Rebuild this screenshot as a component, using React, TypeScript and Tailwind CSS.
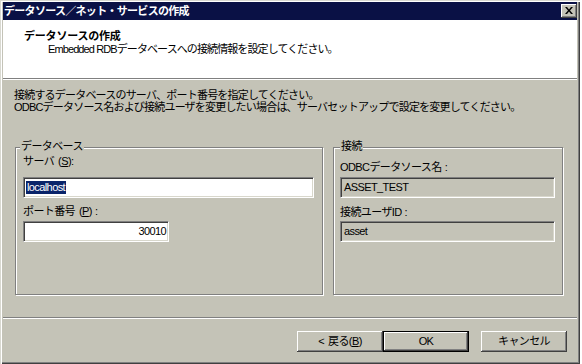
import React from "react";

function CloseButton() {
  return (
    <div className="w-[16px] h-[14px] bg-[#c4c3b7] flex items-center justify-center shadow-[inset_-1px_-1px_0_#404040,inset_1px_1px_0_#ffffff,inset_-2px_-2px_0_#808080]">
      <svg width="8" height="7" viewBox="0 0 8 7" className="mb-[1px]">
        <path d="M0 0h2l2 2.5L6 0h2L5 3.5 8 7H6L4 4.5 2 7H0l3-3.5z" fill="#000" />
      </svg>
    </div>
  );
}

function Group({
  title,
  legendLeft,
  className,
  children,
}: {
  title: string;
  legendLeft: string;
  className: string;
  children: React.ReactNode;
}) {
  return (
    <div
      className={
        "relative flex flex-col border border-[#808080] shadow-[1px_1px_0_#ffffff,inset_1px_1px_0_#ffffff] " +
        className
      }
    >
      <span
        className={
          "absolute top-[-8px] bg-[#c4c3b7] px-[1px] leading-[13px] " +
          legendLeft
        }
      >
        {title}
      </span>
      {children}
    </div>
  );
}

function Field({
  className,
  children,
}: {
  className: string;
  children: React.ReactNode;
}) {
  return (
    <div
      className={
        "h-[21px] flex items-center border-t border-l border-t-[#808080] border-l-[#808080] border-b border-r border-b-white border-r-white shadow-[inset_1px_1px_0_#404040,inset_-1px_-1px_0_#d8d7cc] " +
        className
      }
    >
      {children}
    </div>
  );
}

function Button({
  children,
  isDefault,
}: {
  children: React.ReactNode;
  isDefault?: boolean;
}) {
  if (isDefault) {
    return (
      <div className="w-[86px] h-[21px] border border-black bg-[#c4c3b7] flex items-center justify-center shadow-[inset_-1px_-1px_0_#404040,inset_1px_1px_0_#ffffff,inset_-2px_-2px_0_#808080]">
        {children}
      </div>
    );
  }
  return (
    <div className="w-[86px] h-[21px] bg-[#c4c3b7] flex items-center justify-center shadow-[inset_-1px_-1px_0_#404040,inset_1px_1px_0_#ffffff,inset_-2px_-2px_0_#808080]">
      {children}
    </div>
  );
}

export default function App() {
  return (
    <div className="w-[582px] h-[364px] bg-white overflow-hidden font-['Liberation_Sans','Noto_Sans_CJK_JP',sans-serif] text-[11px] text-black tracking-[-0.6px]">
      <div className="w-[580px] h-[364px] bg-[#c4c3b7] flex flex-col pt-[2px] pl-[3px] pr-[3px] shadow-[inset_1px_1px_0_#d8d8d0,inset_2px_2px_0_#ffffff,inset_-1px_-1px_0_#404040,inset_-2px_-2px_0_#808080]">
        {/* Title bar */}
        <div className="h-[18px] bg-[#0a1145] flex items-center justify-between pl-[1px]">
          <span className="text-white font-bold leading-[18px] tracking-[-0.7px]">
            データソース／ネット・サービスの作成
          </span>
          <CloseButton />
        </div>

        {/* Header */}
        <div className="h-[58px] bg-white flex flex-col pl-[21px] pt-[10px]">
          <div className="font-bold leading-[13px] tracking-[-0.2px]">
            データソースの作成
          </div>
          <div className="pl-[24px] leading-[13px] tracking-[-0.9px]">
            Embedded RDBデータベースへの接続情報を設定してください。
          </div>
        </div>
        <div className="h-[1px] bg-[#808080]" />
        <div className="h-[1px] bg-white" />

        {/* Body */}
        <div className="flex flex-col pl-[11px] pt-[9px] leading-[12px] tracking-[-0.8px]">
          <div>接続するデータベースのサーバ、ポート番号を指定してください。</div>
          <div>
            ODBCデータソース名および接続ユーザを変更したい場合は、サーバセットアップで設定を変更してください。
          </div>
        </div>

        <div className="flex gap-[10px] pl-[12px] mt-[34px]">
          <Group title="データベース" legendLeft="left-[4px]" className="w-[308px] h-[148px] pl-[7px]">
            <div className="mt-[7px] leading-[13px]">
              サーバ<span className="ml-[4px]">(<span className="underline">S</span>):</span>
            </div>
            <Field className="mt-[9px] w-[291px] bg-white pl-[2px]">
              <span className="bg-[#0a246a] text-white px-[1px] leading-[13px]">
                localhost
              </span>
            </Field>
            <div className="mt-[7px] leading-[13px]">
              ポート番号<span className="ml-[4px]">(<span className="underline">P</span>)</span>
              <span className="ml-[3px]">:</span>
            </div>
            <Field className="mt-[3px] w-[146px] bg-white justify-end pr-[2px]">
              <span className="leading-[13px]">30010</span>
            </Field>
          </Group>

          <Group title="接続" legendLeft="left-[6px]" className="w-[230px] h-[148px] pl-[6px]">
            <div className="mt-[13px] leading-[13px]">
              ODBCデータソース名<span className="ml-[3px]">:</span>
            </div>
            <Field className="mt-[3px] w-[215px] bg-[#c4c3b7] pl-[3px]">
              <span className="leading-[13px]">ASSET_TEST</span>
            </Field>
            <div className="mt-[8px] leading-[13px]">
              接続ユーザID<span className="ml-[3px]">:</span>
            </div>
            <Field className="mt-[2px] w-[215px] bg-[#c4c3b7] pl-[3px]">
              <span className="leading-[13px]">asset</span>
            </Field>
          </Group>
        </div>

        <div className="mt-[22px] h-[1px] bg-[#808080]" />
        <div className="h-[1px] bg-white" />

        <div className="flex justify-end pr-[10px] mt-[12px]">
          <Button>
            &lt;<span className="ml-[4px]">戻る(<span className="underline">B</span>)</span>
          </Button>
          <Button isDefault>OK</Button>
          <div className="w-[12px]" />
          <Button>キャンセル</Button>
        </div>
      </div>
    </div>
  );
}
